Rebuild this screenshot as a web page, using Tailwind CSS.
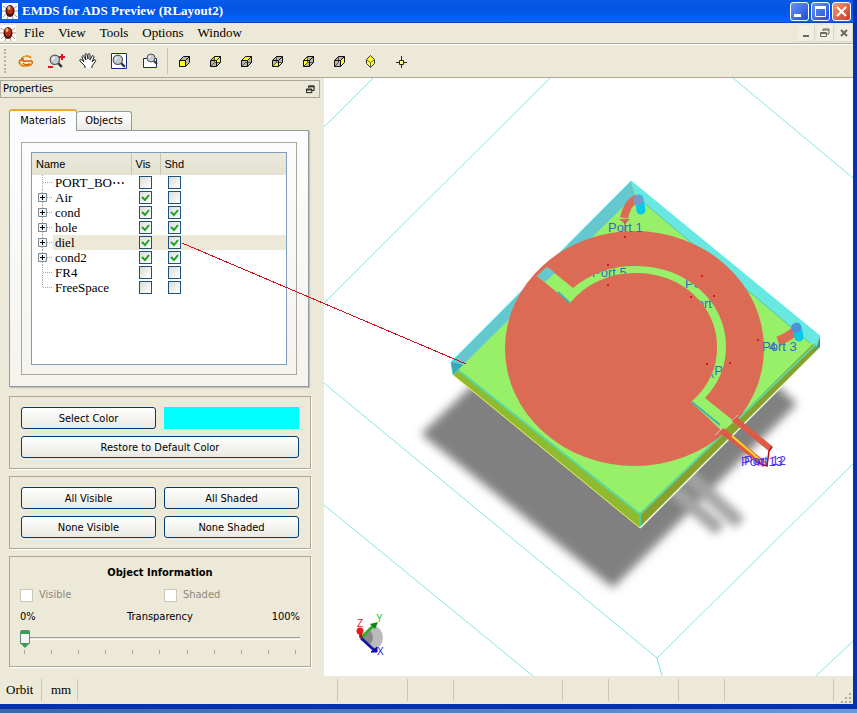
<!DOCTYPE html>
<html lang="en">

<head>
    <meta charset="UTF-8">
    <meta name="viewport" content="width=device-width, initial-scale=1.0">
    <title>EMDS for ADS Preview (RLayout2)</title>
    <script src="https://cdn.jsdelivr.net/npm/@tailwindcss/browser@4"></script>
</head>

<body class="min-h-screen flex flex-col bg-[#5a86c4] text-black font-['DejaVu_Sans_Condensed','DejaVu_Sans',sans-serif] text-[11px] leading-4">
    <svg class="hidden">
        <symbol id="logo" viewBox="0 0 16 16">
            <rect width="16" height="16" fill="#fff" />
            <path d="M1 3l4 3M15 3l-4 3M0 8h16M1 14l4-4M15 14l-4-4M5 16l1-3M11 16l-1-3" stroke="#b89878" />
            <ellipse cx="8" cy="8" rx="4.5" ry="6" fill="#4a1408" />
            <ellipse cx="8" cy="7" rx="3" ry="4" fill="#b83018" />
            <ellipse cx="7" cy="5" rx="1.5" ry="2" fill="#f0b070" />
        </symbol>
        <symbol id="restore" viewBox="0 0 10 10">
            <path d="M3 3V1h6v5H7M3 2h6" fill="none" stroke="currentColor" />
            <path d="M.5 4.500h6v4h-6zM.5 5.500h6" fill="none" stroke="currentColor" />
        </symbol>
        <symbol id="lens" viewBox="0 0 12 12">
            <path d="M7 7l4 4" stroke="#333" stroke-width="2" />
            <circle cx="5" cy="5" r="4" fill="#c4cdd2" stroke="#555" />
            <path d="M3 5a2 2 0 0 1 2-2" stroke="#fff" fill="none" />
        </symbol>
    </svg>

    <div class="flex-1 flex flex-col border-r-4 border-b-[5px] border-[#0831b0]">
        <header class="h-[23px] flex items-center gap-1 pl-[2px] pr-[2px] bg-linear-to-b from-[#0a5ae8] via-[#0055e5] to-[#0665fb] border-b border-[#0844c0] text-white">
            <svg class="size-4"><use href="#logo" /></svg>
            <h1 class="flex-1 font-['Liberation_Serif',serif] font-bold text-[13px]">EMDS for ADS Preview (RLayout2)</h1>
            <div class="flex gap-[2px]">
                <button aria-label="Minimize" class="size-[19px] rounded-[3px] border border-white bg-linear-to-br from-[#6d92f4] to-[#1c4bd6]">
                    <svg viewBox="0 0 17 17"><path d="M3 12.500h7" stroke="#fff" stroke-width="3" /></svg>
                </button>
                <button aria-label="Maximize" class="size-[19px] rounded-[3px] border border-white bg-linear-to-br from-[#6d92f4] to-[#1c4bd6]">
                    <svg viewBox="0 0 17 17"><path d="M3.500 4v9.500h10V4M3 4.500h11" fill="none" stroke="#fff" stroke-width="1" /><path d="M3 4.500h11" stroke="#fff" stroke-width="3" /></svg>
                </button>
                <button aria-label="Close" class="size-[19px] rounded-[3px] border border-white bg-linear-to-br from-[#f09a80] to-[#c8381a]">
                    <svg viewBox="0 0 17 17"><path d="M4 4l9 9M13 4l-9 9" stroke="#fff" stroke-width="2" /></svg>
                </button>
            </div>
        </header>

        <nav class="h-[21px] flex items-center bg-[#ece9d8] border-b border-[#aca899] font-['Liberation_Serif',serif] text-[13px]">
            <svg class="size-4 mr-2"><use href="#logo" /></svg>
            <div class="flex-1 flex gap-[14px]">
                <button>File</button>
                <button>View</button>
                <button>Tools</button>
                <button>Options</button>
                <button>Window</button>
            </div>
            <div class="flex gap-[2px] text-[#6a675c]">
                <button aria-label="Minimize document" class="size-[17px] bg-[#f1efe4] border-r border-b border-[#dcd8c6]"><svg viewBox="0 0 16 16"><path d="M5 11h6" stroke="currentColor" stroke-width="2" /></svg></button>
                <button aria-label="Restore document" class="size-[17px] bg-[#f1efe4] border-r border-b border-[#dcd8c6] flex items-center justify-center"><svg class="size-[10px]"><use href="#restore" /></svg></button>
                <button aria-label="Close document" class="size-[17px] bg-[#f1efe4] border-r border-b border-[#dcd8c6]"><svg viewBox="0 0 16 16"><path d="M5 5l6 6M11 5l-6 6" stroke="currentColor" stroke-width="2" /></svg></button>
            </div>
        </nav>

        <div class="h-[34px] flex items-center bg-[#ece9d8] border-t border-t-white border-b border-b-[#aca899]">
            <div class="w-[10px] h-6 flex justify-center"><span class="border-l-2 border-dotted border-[#b5b19f]"></span></div>
            <button aria-label="Orbit" class="w-[31px] h-7 flex items-center justify-center">
                <svg class="size-4" viewBox="0 0 16 16" fill="none" stroke="#d86000" stroke-width="1.500"><path d="M13 5c-2-3-8-2-9 0s1 4 4 3h6M14 8c2 5-9 7-12 3-2-3 1-5 4-5M12 11c-3 1-6 1-7-1" /><path d="M2 11c3 4 9 3 12-1M4 5c2-2 6-3 9 0" stroke="#f8a820" stroke-width="1" /></svg>
            </button>
            <button aria-label="Zoom in and out" class="w-[31px] h-7 flex items-center justify-center">
                <svg class="size-[17px]" viewBox="0 0 17 17"><use href="#lens" x="1" y="1" width="14" height="14" /><path d="M11 4h6M14 1v6" stroke="#e01020" stroke-width="2" /><path d="M0 14h5" stroke="#e01020" stroke-width="2" /></svg>
            </button>
            <button aria-label="Pan" class="w-[31px] h-7 flex items-center justify-center">
                <svg class="size-[18px]" viewBox="0 0 18 18" fill="#fff" stroke="#222"><path d="M6 16v-2L1 9c-1-2 1-2 2-1l2 2L3 5c0-2 2-2 2 0l2 3-1-5c0-2 2-2 2 0l1 4V3c0-2 2-2 2 0v5l2-4c1-1 2 0 2 1l-2 5 2-2c2-1 2 1 1 2l-3 4v2" /></svg>
            </button>
            <button aria-label="Zoom to fit" class="w-[31px] h-7 flex items-center justify-center">
                <svg class="size-4" viewBox="0 0 16 16"><path d="M.5.5h15v15H.5z" fill="#fff" stroke="#1a2a7a" /><use href="#lens" x="1" y="1" width="14" height="14" /></svg>
            </button>
            <button aria-label="Zoom window" class="w-[31px] h-7 flex items-center justify-center">
                <svg class="size-4" viewBox="0 0 16 16"><path d="M1.500 5.500h13v9h-13z" fill="#fff" stroke="#1a2a7a" /><use href="#lens" x="4" y="0" width="12" height="12" /></svg>
            </button>
            <span class="w-1 h-[26px] flex justify-center"><span class="border-l border-[#c5c2b0]"></span></span>
            <div id="viewButtons" class="flex"></div>
            <button aria-label="Isometric view" class="w-[31px] h-7 flex items-center justify-center">
                <svg class="size-[13px]" viewBox="0 0 13 13"><path d="M6.500.5l4 4v4l-4 4-4-4v-4z" fill="#ffff20" stroke="#333" /><path d="M2.500 4.500l4 3 4-3M6.500 7.500v5" fill="none" stroke="#666" /></svg>
            </button>
            <button aria-label="Set origin" class="w-[31px] h-7 flex items-center justify-center">
                <svg class="size-[13px]" viewBox="0 0 13 13"><path d="M6.500 1v4M6.500 9v4M1 7.500h3M9 7.500h3" stroke="#222" /><path d="M4.500 5.500h4v4h-4z" fill="#ffff80" stroke="#222" /></svg>
            </button>
        </div>

        <main class="relative flex-1 flex bg-[#ece9d8]">
            <aside class="w-[324px] shrink-0 pt-[2px]">
                <div class="mr-1 h-[18px] flex items-center justify-between pl-[2px] pr-1 border border-[#aca899]">
                    <h2>Properties</h2>
                    <button aria-label="Float panel"><svg class="size-[9px]"><use href="#restore" /></svg></button>
                </div>

                <div class="ml-[9px] mr-[14px] mt-[11px]">
                    <div role="tablist" class="flex items-end">
                        <button role="tab" aria-selected="true" class="relative -mb-px h-[22px] w-[68px] rounded-t-[3px] border border-b-0 border-t-2 border-[#919b9c] border-t-[#f0a830] bg-[#fcfcfe]">Materials</button>
                        <button role="tab" aria-selected="false" class="h-[19px] w-[55px] rounded-t-[3px] border border-l-0 border-b-0 border-[#919b9c] bg-linear-to-b from-white to-[#ecebe6]">Objects</button>
                    </div>
                    <div class="mr-px p-[11px] border border-[#919b9c] bg-linear-to-b from-[#fcfcfe] to-[#f4f3ee] shadow-[1px_1px_1px_#c4c1b0]">
                        <div class="p-[9px] border border-[#aca899]">
                            <div class="h-[213px] border border-[#7f9db9] bg-white">
                                <table class="w-full table-fixed border-collapse">
                                    <thead class="h-[22px] bg-linear-to-b from-[#ebeadb] to-[#e4e1d0] font-['Liberation_Sans',sans-serif] text-left">
                                        <tr>
                                            <th class="w-[99px] pl-1 font-normal border-r border-[#c9c6b5]">Name</th>
                                            <th class="w-[29px] pl-1 font-normal border-r border-[#c9c6b5]">Vis</th>
                                            <th class="pl-1 font-normal">Shd</th>
                                        </tr>
                                    </thead>
                                    <tbody id="materialList" class="font-['Liberation_Serif',serif] text-[13px] leading-[15px]"></tbody>
                                </table>
                            </div>
                        </div>
                    </div>
                </div>

                <div class="ml-[9px] mr-[13px] mt-[9px] flex flex-col gap-[7px]">
                    <section class="h-[73px] grid grid-cols-2 content-start gap-x-2 gap-y-[7px] px-[11px] pt-[10px] border border-[#aca899] shadow-[1px_1px_0_#fff]">
                        <button class="h-[22px] pt-[2px] rounded-[3px] border border-[#003c74] bg-linear-to-b from-white to-[#eae9e2]">Select Color</button>
                        <div class="h-[22px] bg-[#00ffff]"></div>
                        <button class="col-span-2 h-[22px] pt-[2px] rounded-[3px] border border-[#003c74] bg-linear-to-b from-white to-[#eae9e2]">Restore to Default Color</button>
                    </section>

                    <section class="h-[73px] grid grid-cols-2 content-start gap-x-2 gap-y-[7px] px-[11px] pt-[10px] border border-[#aca899] shadow-[1px_1px_0_#fff]">
                        <button class="h-[22px] pt-[2px] rounded-[3px] border border-[#003c74] bg-linear-to-b from-white to-[#eae9e2]">All Visible</button>
                        <button class="h-[22px] pt-[2px] rounded-[3px] border border-[#003c74] bg-linear-to-b from-white to-[#eae9e2]">All Shaded</button>
                        <button class="h-[22px] pt-[2px] rounded-[3px] border border-[#003c74] bg-linear-to-b from-white to-[#eae9e2]">None Visible</button>
                        <button class="h-[22px] pt-[2px] rounded-[3px] border border-[#003c74] bg-linear-to-b from-white to-[#eae9e2]">None Shaded</button>
                    </section>

                    <section class="h-[111px] px-[10px] pt-2 border border-[#aca899] shadow-[1px_1px_0_#fff]">
                        <h3 class="text-center font-bold">Object Information</h3>
                        <div class="mt-[6px] grid grid-cols-2 gap-2 text-[#8c8a7c]">
                            <label class="flex items-center gap-[6px]"><input type="checkbox" disabled class="appearance-none size-[13px] border border-[#cac8bb] bg-white">Visible</label>
                            <label class="flex items-center gap-[6px]"><input type="checkbox" disabled class="appearance-none size-[13px] border border-[#cac8bb] bg-white">Shaded</label>
                        </div>
                        <div class="mt-[6px] grid grid-cols-3">
                            <span>0%</span>
                            <label for="transparency" class="text-center">Transparency</label>
                            <span class="text-right">100%</span>
                        </div>
                        <input type="range" id="transparency" min="0" max="100" value="0" class="mt-1 block w-full h-[19px] appearance-none bg-transparent [&::-webkit-slider-runnable-track]:h-[3px] [&::-webkit-slider-runnable-track]:border-t [&::-webkit-slider-runnable-track]:border-b [&::-webkit-slider-runnable-track]:border-t-[#9d9c99] [&::-webkit-slider-runnable-track]:border-b-white [&::-webkit-slider-thumb]:appearance-none [&::-webkit-slider-thumb]:w-[10px] [&::-webkit-slider-thumb]:h-[18px] [&::-webkit-slider-thumb]:mt-[-8px] [&::-webkit-slider-thumb]:border [&::-webkit-slider-thumb]:border-b-[5px] [&::-webkit-slider-thumb]:border-[#60887c] [&::-webkit-slider-thumb]:border-b-[#3f9a58] [&::-webkit-slider-thumb]:rounded-t-[2px] [&::-webkit-slider-thumb]:bg-[linear-gradient(#35a050_3px,#f4f4f0_3px)] [&::-webkit-slider-thumb]:[clip-path:polygon(0_0,100%_0,100%_72%,50%_100%,0_72%)]">
                        <div class="mt-[2px] flex justify-between px-1">
                            <span class="h-1 border-l border-[#aca899]"></span>
                            <span class="h-1 border-l border-[#aca899]"></span>
                            <span class="h-1 border-l border-[#aca899]"></span>
                            <span class="h-1 border-l border-[#aca899]"></span>
                            <span class="h-1 border-l border-[#aca899]"></span>
                            <span class="h-1 border-l border-[#aca899]"></span>
                            <span class="h-1 border-l border-[#aca899]"></span>
                            <span class="h-1 border-l border-[#aca899]"></span>
                            <span class="h-1 border-l border-[#aca899]"></span>
                            <span class="h-1 border-l border-[#aca899]"></span>
                            <span class="h-1 border-l border-[#aca899]"></span>
                        </div>
                    </section>
                </div>
            </aside>

            <!-- 3D view of the layout -->
            <div class="relative flex-1 min-w-0 bg-white">
                <svg class="absolute inset-0 size-full font-['Liberation_Sans',sans-serif]" viewBox="324 78 529 598" preserveAspectRatio="xMinYMin slice" role="img" aria-label="Layout preview">
                    <defs>
                        <filter id="soft" x="-20%" y="-20%" width="140%" height="140%"><feGaussianBlur stdDeviation="5" /></filter>
                        <filter id="softSmall" x="-50%" y="-50%" width="200%" height="200%"><feGaussianBlur stdDeviation="4" /></filter>
                        <path id="slot" d="M547 267L573 288A89 80 0 0 1 637 266A89 80 0 0 1 726 346A89 80 0 0 1 705 398L735 422L723 432L691 402A80 73 0 0 0 717 346A80 73 0 0 0 637 273A80 73 0 0 0 570 303L537 276Z" />
                        <clipPath id="slotClip"><use href="#slot" /></clipPath>
                    </defs>

                    <!-- air box -->
                    <path d="M373 78L324 127M550 78L324 303M733 78L853 178M324 383L657 658L853 464M657 658L662 676M324 505L533 676M816 676L853 641" fill="none" stroke="#7fe6e6" />

                    <!-- shadow -->
                    <path d="M421 434L613 588L797 404L740 350L520 340Z" fill="#808080" filter="url(#soft)" />
                    <path d="M680 468L740 523M668 485L720 530" fill="none" stroke="#a4a4a4" stroke-width="14" filter="url(#softSmall)" />

                    <!-- substrate -->
                    <path d="M452 362L453 375L640 528V514Z" fill="#8fbb30" />
                    <path d="M640 514L819 335L820 348L640 528Z" fill="#89a02a" />
                    <path d="M631 181L820 337L640 515L451 364Z" fill="#98f068" />
                    <path d="M631 181L451 362L454 374L465 363L635 195Z" fill="#66c8cf" />
                    <path d="M631 181L820 336L817 347L808 341L636 196Z" fill="#68e8e0" />
                    <path d="M636 196L810 343" stroke="#50c8b0" />
                    <path d="M817 347l3-11v10l-8 8z" fill="#3a9a80" />
                    <path d="M453 366L640 514L816 344" fill="none" stroke="#5ad8a0" stroke-width="2" />
                    <path d="M640 514V528" stroke="#50d0a0" stroke-width="2" />
                    <path d="M453 375L640 528" stroke="#f0f070" />
                    <path d="M640 528L820 348" stroke="#f4fff0" stroke-width="1.500" />
                    <path d="M631 181L451 362L453 375M631 181L820 336" fill="none" stroke="#50f0f0" />
                    <path d="M451 362l12 3-10 9z" fill="#38a8b8" />

                    <!-- conductor -->
                    <ellipse cx="634.500" cy="348.500" rx="129.500" ry="117.500" fill="#dc6b56" />
                    <use href="#slot" fill="#98f068" />
                    <path d="M547 267L537 276L545 282L555 273Z" fill="#66c8cf" />
                    <path d="M558 292L570 303M692 402L720 425" stroke="#48b0b0" stroke-width="2" />
                    <path d="M735 421L722 432L728 438L741 426Z" fill="#89a02a" />
                    <path d="M733 418L771 449" stroke="#dc5b46" stroke-width="6" />
                    <path d="M721 430L765 465" stroke="#dc5b46" stroke-width="6" />
                    <path d="M732 436L767 466" stroke="#f8d820" stroke-width="2" />
                    <path d="M772 447L769 451L767 466L756 462" fill="none" stroke="#c00818" stroke-width="1.500" />
                    <path d="M715 435L724 427M728 424L738 415" stroke="#d8c8b8" />

                    <!-- vias -->
                    <path d="M637 198Q627 203 624 218" fill="none" stroke="#dc6b56" stroke-width="8" />
                    <path d="M639 199L641 210" stroke="#08c8f0" stroke-width="9" stroke-linecap="round" />
                    <circle cx="638" cy="200" r="5" fill="#7898c8" />
                    <path d="M795 331Q787 338 778 341" fill="none" stroke="#dc6b56" stroke-width="9" />
                    <path d="M797 327L799 337" stroke="#08c8f0" stroke-width="9" stroke-linecap="round" />
                    <circle cx="796" cy="328" r="5" fill="#5090d8" />
                    <path d="M619 219h11l-5 5z" fill="#dc6b56" />
                    <path d="M625 221v10" stroke="#905848" />

                    <g fill="#3868c8" font-size="13">
                        <text x="608" y="232">Port 1</text>
                        <g clip-path="url(#slotClip)">
                            <text x="592" y="277">Port 5</text>
                            <text x="685" y="288">Port 7</text>
                            <text x="688" y="308">Port 8</text>
                            <text x="710" y="375">(Port 6</text>
                        </g>
                        <text x="762" y="351">Port 3</text>
                        <text x="769" y="351">4</text>
                    </g>
                    <g fill="#5038e8" font-size="13">
                        <text x="741" y="466">Port 13</text>
                        <text x="744" y="465">Port 12</text>
                    </g>
                    <path d="M624 237h2M607 265h2M607 285h2M701 276h2M690 297h2M713 296h2M706 364h2M729 363h2M757 340h2" stroke="#d01818" stroke-width="2" />

                    <!-- axes -->
                    <path d="M362 638L373 625A13 13 0 0 1 374 650Z" fill="#bbb" />
                    <path d="M362 638L369 630A9 9 0 0 1 370 644Z" fill="#8a8a8a" />
                    <path d="M361 638L374 625" stroke="#28b028" stroke-width="3" />
                    <path d="M370 624L378 622L375 629Z" fill="#108018" />
                    <path d="M361 638L374 650" stroke="#1818a0" stroke-width="3" />
                    <path d="M377 647L377 652L371 652Z" fill="#0808b0" stroke="#0808b0" />
                    <path d="M361 638L360 631" stroke="#b01010" stroke-width="3" />
                    <circle cx="360" cy="631" r="3.500" fill="#e81818" />
                    <g font-size="10">
                        <text x="357" y="627" fill="#e02020">Z</text>
                        <text x="376" y="622" fill="#30c030">Y</text>
                        <text x="377" y="655" fill="#2020d0">X</text>
                    </g>
                </svg>
            </div>

            <!-- callout from the diel row to the substrate -->
            <svg class="absolute inset-0 size-full pointer-events-none">
                <path d="M182 165L466 286" stroke="#d01020" shape-rendering="crispEdges" />
            </svg>
        </main>

        <footer class="h-[28px] flex items-center bg-[#ece9d8] font-['Liberation_Serif',serif] text-[13px]">
            <span class="w-[42px] h-[22px] pl-[6px] leading-[22px] border-r border-[#c9c6b5]">Orbit</span>
            <span class="w-[36px] h-[22px] pl-[9px] leading-[22px] border-r border-[#c9c6b5]">mm</span>
            <span class="w-[260px] h-[22px] border-r border-[#c9c6b5]"></span>
            <span class="w-[70px] h-[22px] border-r border-[#c9c6b5]"></span>
            <span class="w-[46px] h-[22px] border-r border-[#c9c6b5]"></span>
            <span class="w-[109px] h-[22px] border-r border-[#c9c6b5]"></span>
            <span class="w-[46px] h-[22px] border-r border-[#c9c6b5]"></span>
            <span class="w-[70px] h-[22px] border-r border-[#c9c6b5]"></span>
            <span class="w-[46px] h-[22px] border-r border-[#c9c6b5]"></span>
            <span class="flex-1 h-[22px] border-r border-[#c9c6b5]"></span>
            <svg class="w-[19px] h-[28px]" viewBox="0 0 19 28"><path d="M15 18h2M11 22h2M15 22h2M7 26h2M11 26h2M15 26h2" stroke="#b0ad9c" stroke-width="2" /></svg>
        </footer>
    </div>
    <div class="h-1 bg-linear-to-r from-[#3c66a4] to-[#6c98d4]"></div>

    <script>
        const materials = [
            { name: "PORT_BO\u22ef", children: false, vis: false, shd: false },
            { name: "Air", children: true, vis: true, shd: false },
            { name: "cond", children: true, vis: true, shd: true },
            { name: "hole", children: true, vis: true, shd: true },
            { name: "diel", children: true, vis: true, shd: true, selected: true },
            { name: "cond2", children: true, vis: true, shd: true },
            { name: "FR4", children: false, vis: false, shd: false },
            { name: "FreeSpace", children: false, vis: false, shd: false }
        ];

        // highlighted face of each cube icon, and the edges drawn over it
        const wire = "M4.5 .5v6h6M.5 10.5l4-4";
        const views = [
            { name: "Front view", face: "M.5 4.5h6v6h-6z", inner: "" },
            { name: "Back view", face: "M4.5 .5h6v6h-6z", inner: wire },
            { name: "Top view", face: "M.5 4.5l4-4h6l-4 4z", inner: "M.5 10.5l4-4h6" },
            { name: "Bottom view", face: "M.5 10.5l4-4h6l-4 4z", inner: wire },
            { name: "Left view", face: "M.5 4.5l4-4v6l-4 4z", inner: wire },
            { name: "Right view", face: "M6.5 4.5l4-4v6l-4 4z", inner: "M4.5 .5v6l-4 4" }
        ];

        function checkCell(name, column, checked) {
            return `<label class="size-[13px] ml-2 grid">
                <input type="checkbox" aria-label="${name} ${column}" ${checked ? 'checked' : ''} class="peer col-start-1 row-start-1 appearance-none size-[13px] border border-[#1c5180] bg-linear-to-br from-[#dcdcd7] to-white">
                <svg class="col-start-1 row-start-1 size-[13px] hidden peer-checked:block pointer-events-none" viewBox="0 0 13 13"><path d="M3 6l3 3 4-5" fill="none" stroke="#21a121" stroke-width="2" /></svg>
            </label>`;
        }

        function loadMaterials() {
            document.getElementById('materialList').innerHTML = materials.map((item, index) => {
                const bg = item.selected ? 'bg-[#ece9d8]' : '';
                const line = index === materials.length - 1 ? 'M10.500 0v7' : 'M10.500 0v15';
                const box = item.children
                    ? '<path d="M6.500 3.500h8v8h-8z" fill="#f4f3ee" stroke="#7a8a99" /><path d="M8 7.500h5M10.500 5v5" stroke="#000" />'
                    : '';
                return `<tr class="h-[15px]">
                    <td class="p-0">
                        <div class="h-[15px] flex items-center overflow-hidden whitespace-nowrap">
                            <svg class="w-[21px] h-[15px] shrink-0" viewBox="0 0 21 15"><path d="${line}M11 7.500h9" stroke="#a8a8a8" stroke-dasharray="1 1" />${box}</svg>
                            <span class="flex-1 h-[15px] pl-[2px] ${bg}">${item.name}</span>
                        </div>
                    </td>
                    <td class="p-0 ${bg}">${checkCell(item.name, 'Vis', item.vis)}</td>
                    <td class="p-0 ${bg}">${checkCell(item.name, 'Shd', item.shd)}</td>
                </tr>`;
            }).join('');
        }

        function loadViews() {
            document.getElementById('viewButtons').innerHTML = views.map(view => `
                <button aria-label="${view.name}" class="w-[31px] h-7 flex items-center justify-center">
                    <svg class="size-[11px]" viewBox="0 0 11 11"><path d="M.5 4.5l4-4h6v6l-4 4h-6z" fill="#b8b6ac" /><path d="${view.face}" fill="#ffff20" /><path d="${view.inner}" fill="none" stroke="#555" /><path d="M.5 4.5h6v6h-6zM.5 4.5l4-4h6v6l-4 4M6.5 4.5l4-4" fill="none" stroke="#111" /></svg>
                </button>`).join('');
        }

        loadMaterials();
        loadViews();
    </script>
</body>

</html>
